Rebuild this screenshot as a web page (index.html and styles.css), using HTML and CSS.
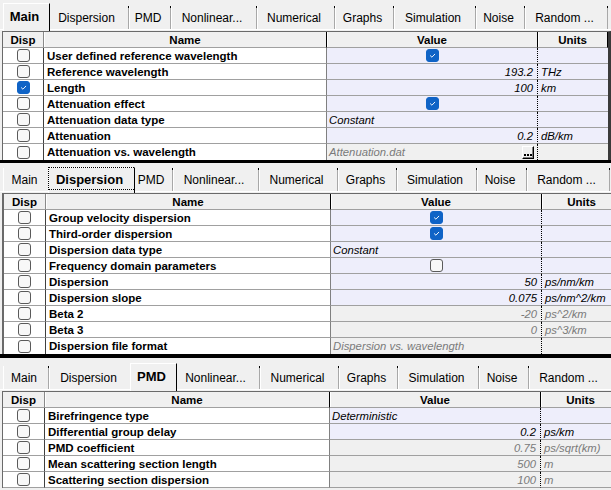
FILE: index.html
```html
<!DOCTYPE html>
<html>
<head>
<meta charset="utf-8">
<link rel="stylesheet" href="styles.css">
</head>
<body>
<section class="pane p1">
  <div class="tabs">
    <div class="tab on">Main</div>
    <div class="tab">Dispersion</div>
    <div class="tab">PMD</div>
    <div class="tab">Nonlinear...</div>
    <div class="tab">Numerical</div>
    <div class="tab">Graphs</div>
    <div class="tab">Simulation</div>
    <div class="tab">Noise</div>
    <div class="tab">Random ...</div>
  </div>
  <div class="grid">
    <div class="row hdr"><div>Disp</div><div>Name</div><div>Value</div><div>Units</div></div>
    <div class="row"><div class="c-disp"><span class="cb"></span></div><div class="c-name">User defined reference wavelength</div><div class="c-val ctr"><span class="cb on"><svg viewBox="0 0 13 13"><path d="M4 6.8 L5.8 8.5 L9.2 5"/></svg></span></div><div class="c-unit"></div></div>
    <div class="row"><div class="c-disp"><span class="cb"></span></div><div class="c-name">Reference wavelength</div><div class="c-val num">193.2</div><div class="c-unit">THz</div></div>
    <div class="row"><div class="c-disp"><span class="cb on"><svg viewBox="0 0 13 13"><path d="M4 6.8 L5.8 8.5 L9.2 5"/></svg></span></div><div class="c-name">Length</div><div class="c-val num">100</div><div class="c-unit">km</div></div>
    <div class="row"><div class="c-disp"><span class="cb"></span></div><div class="c-name">Attenuation effect</div><div class="c-val ctr"><span class="cb on"><svg viewBox="0 0 13 13"><path d="M4 6.8 L5.8 8.5 L9.2 5"/></svg></span></div><div class="c-unit"></div></div>
    <div class="row"><div class="c-disp"><span class="cb"></span></div><div class="c-name">Attenuation data type</div><div class="c-val txt">Constant</div><div class="c-unit"></div></div>
    <div class="row"><div class="c-disp"><span class="cb"></span></div><div class="c-name">Attenuation</div><div class="c-val num">0.2</div><div class="c-unit">dB/km</div></div>
    <div class="row last"><div class="c-disp"><span class="cb"></span></div><div class="c-name">Attenuation vs. wavelength</div><div class="c-val txt off file"><span>Attenuation.dat</span><span class="dots"><svg viewBox="0 0 10 11"><rect x="1" y="7" width="2" height="2"/><rect x="4" y="7" width="2" height="2"/><rect x="7" y="7" width="2" height="2"/></svg></span></div><div class="c-unit off"></div></div>
  </div>
</section>
<div class="splitter split-a"></div>
<section class="pane p2">
  <div class="tabs">
    <div class="tab">Main</div>
    <div class="tab on focus">Dispersion</div>
    <div class="tab">PMD</div>
    <div class="tab">Nonlinear...</div>
    <div class="tab">Numerical</div>
    <div class="tab">Graphs</div>
    <div class="tab">Simulation</div>
    <div class="tab">Noise</div>
    <div class="tab">Random ...</div>
  </div>
  <div class="grid">
    <div class="row hdr"><div>Disp</div><div>Name</div><div>Value</div><div>Units</div></div>
    <div class="row"><div class="c-disp"><span class="cb"></span></div><div class="c-name">Group velocity dispersion</div><div class="c-val ctr"><span class="cb on"><svg viewBox="0 0 13 13"><path d="M4 6.8 L5.8 8.5 L9.2 5"/></svg></span></div><div class="c-unit"></div></div>
    <div class="row"><div class="c-disp"><span class="cb"></span></div><div class="c-name">Third-order dispersion</div><div class="c-val ctr"><span class="cb on"><svg viewBox="0 0 13 13"><path d="M4 6.8 L5.8 8.5 L9.2 5"/></svg></span></div><div class="c-unit"></div></div>
    <div class="row"><div class="c-disp"><span class="cb"></span></div><div class="c-name">Dispersion data type</div><div class="c-val txt">Constant</div><div class="c-unit"></div></div>
    <div class="row"><div class="c-disp"><span class="cb"></span></div><div class="c-name">Frequency domain parameters</div><div class="c-val ctr"><span class="cb"></span></div><div class="c-unit"></div></div>
    <div class="row"><div class="c-disp"><span class="cb"></span></div><div class="c-name">Dispersion</div><div class="c-val num">50</div><div class="c-unit">ps/nm/km</div></div>
    <div class="row"><div class="c-disp"><span class="cb"></span></div><div class="c-name">Dispersion slope</div><div class="c-val num">0.075</div><div class="c-unit">ps/nm^2/km</div></div>
    <div class="row"><div class="c-disp"><span class="cb"></span></div><div class="c-name">Beta 2</div><div class="c-val num off">-20</div><div class="c-unit off">ps^2/km</div></div>
    <div class="row"><div class="c-disp"><span class="cb"></span></div><div class="c-name">Beta 3</div><div class="c-val num off">0</div><div class="c-unit off">ps^3/km</div></div>
    <div class="row last"><div class="c-disp"><span class="cb"></span></div><div class="c-name">Dispersion file format</div><div class="c-val txt off">Dispersion vs. wavelength</div><div class="c-unit off"></div></div>
  </div>
</section>
<div class="splitter split-b"></div>
<section class="pane p3">
  <div class="tabs">
    <div class="tab">Main</div>
    <div class="tab">Dispersion</div>
    <div class="tab on">PMD</div>
    <div class="tab">Nonlinear...</div>
    <div class="tab">Numerical</div>
    <div class="tab">Graphs</div>
    <div class="tab">Simulation</div>
    <div class="tab">Noise</div>
    <div class="tab">Random ...</div>
  </div>
  <div class="grid">
    <div class="row hdr"><div>Disp</div><div>Name</div><div>Value</div><div>Units</div></div>
    <div class="row"><div class="c-disp"><span class="cb"></span></div><div class="c-name">Birefringence type</div><div class="c-val txt">Deterministic</div><div class="c-unit"></div></div>
    <div class="row"><div class="c-disp"><span class="cb"></span></div><div class="c-name">Differential group delay</div><div class="c-val num">0.2</div><div class="c-unit">ps/km</div></div>
    <div class="row"><div class="c-disp"><span class="cb"></span></div><div class="c-name">PMD coefficient</div><div class="c-val num off">0.75</div><div class="c-unit off">ps/sqrt(km)</div></div>
    <div class="row"><div class="c-disp"><span class="cb"></span></div><div class="c-name">Mean scattering section length</div><div class="c-val num off">500</div><div class="c-unit off">m</div></div>
    <div class="row"><div class="c-disp"><span class="cb"></span></div><div class="c-name">Scattering section dispersion</div><div class="c-val num off">100</div><div class="c-unit off">m</div></div>
  </div>
</section>
</body>
</html>
```
FILE: styles.css
```css
* { box-sizing: border-box; }
html, body { margin: 0; padding: 0; }
body {
  width: 611px;
  height: 490px;
  overflow: hidden;
  background: #f0f0f0;
  font-family: "Liberation Sans", Arial, sans-serif;
  font-size: 12px;
  color: #000;
}
.pane { display: flex; flex-direction: column; overflow: hidden; }
.splitter { background: #000; }
.split-a { height: 3px; }
.split-b { height: 4px; }

/* ---------- tabs ---------- */
.tabs {
  display: grid;
  align-items: end;
  padding-bottom: 2px;
  background: linear-gradient(to top, #f0f0f0 0, #f0f0f0 1px, #ffffff 1px, #ffffff 2px, #f0f0f0 2px);
}
.p1 .tabs { height: 31px; padding-left: 5px; grid-template-columns: 43px 81px 42px 86px 78px 59px 82px 49px 83px; }
.p2 .tabs { height: 30px; padding-left: 3px; grid-template-columns: 47px 83px 40px 86px 79px 59px 80px 50px 83px; }
.p3 .tabs { height: 33px; padding-left: 3px; grid-template-columns: 46px 83px 43px 85px 79px 59px 81px 50px 83px; }

.tab {
  position: relative;
  height: 23px;
  display: flex;
  align-items: center;
  justify-content: center;
  padding-right: 4px;
  white-space: nowrap;
  border-left: 1px solid #fff;
  border-right: 1px solid #a8a8a8;
  color: #000;
}
.tab::before {
  content: "";
  position: absolute;
  right: -1px;
  top: 0;
  width: 1px;
  height: 2px;
  background: #000;
}
.tab.on {
  z-index: 1;
  height: 28px;
  margin: 0 -2px -2px;
  padding-bottom: 2px;
  background: #f0f0f0;
  font-weight: bold;
  font-size: 13px;
  border-top: 1px solid #fff;
  border-left: 1px solid #fff;
  border-right: 1px solid #000;
}
.p2 .tab.on { height: 26px; }
.tab.on::before { display: none; }
.tab.focus::after {
  content: "";
  position: absolute;
  left: -1px;
  top: -1px;
  right: 0;
  bottom: 3px;
  border: 1px dotted #000;
  border-right: none;
}

/* ---------- property grid ---------- */
.grid {
  margin-left: 2px;
  border-top: 1px solid #6a6a6a;
  border-left: 1px solid #6a6a6a;
}
.p1 .grid { --cols: 41px 283px 211px 70px; border-right: 3px solid #3a3a3a; width: 609px; }
.p2 .grid { --cols: 42px 285px 211px 80px; border-left-width: 2px; }
.p3 .grid { --cols: 42px 285px 211px 80px; }

.row {
  display: grid;
  grid-template-columns: var(--cols);
  height: 16px;
}
.row > div {
  height: 16px;
  border-bottom: 1px solid #a0a0a0;
  display: flex;
  align-items: center;
  white-space: nowrap;
  overflow: hidden;
}
.p1 .row.last > div { border-bottom: none; }
.p2 .row.last > div { border-bottom: none; }

.hdr > div {
  justify-content: center;
  font-weight: bold;
  font-size: 11.5px;
  background: #f0f0f0;
  border-right: 1px solid #000;
  box-shadow: inset 1px 0 0 #fff;
}
.hdr > div:first-child { border-right-color: #8a8a8a; box-shadow: none; }

.c-disp {
  background: #fff;
  justify-content: center;
  border-right: 1px solid #404040;
}
.c-name {
  background: #fff;
  border-right: 1px solid #808080;
  font-weight: bold;
  font-size: 11.5px;
  padding-left: 3px;
}
.c-val {
  background: #eeeefb;
  border-right: 1px dotted #000;
  font-style: italic;
  font-size: 11.3px;
}
.c-unit {
  background: #eeeefb;
  font-style: italic;
  font-size: 11.3px;
  padding-left: 3px;
}
.ctr { justify-content: center; }
.num { justify-content: flex-end; padding-right: 4px; }
.txt { padding-left: 2px; }
.off { background: #f0f0f0; color: #7a7a7a; }
.file { justify-content: space-between; padding-right: 3px; }

.dots {
  display: block;
  width: 12px;
  height: 13px;
  margin-top: 1px;
  background: #f0f0f0;
  border: 1px solid;
  border-color: #fff #000 #000 #fff;
  box-shadow: inset -1px -1px 0 #808080;
}
.dots svg {
  display: block;
  width: 10px;
  height: 11px;
}
.dots svg rect { fill: #000; }

/* ---------- checkbox ---------- */
.cb {
  display: block;
  width: 13px;
  height: 13px;
  border: 1px solid #5a5a5a;
  border-radius: 3px;
  background: #f8f8f8;
}
.cb.on {
  background: #0f63c6;
  border-color: #0f63c6;
}
.cb svg {
  display: block;
  width: 11px;
  height: 11px;
  margin: 0;
}
.cb svg path {
  fill: none;
  stroke: #fff;
  stroke-width: 1.1;
  stroke-linecap: round;
  stroke-linejoin: round;
}
```
